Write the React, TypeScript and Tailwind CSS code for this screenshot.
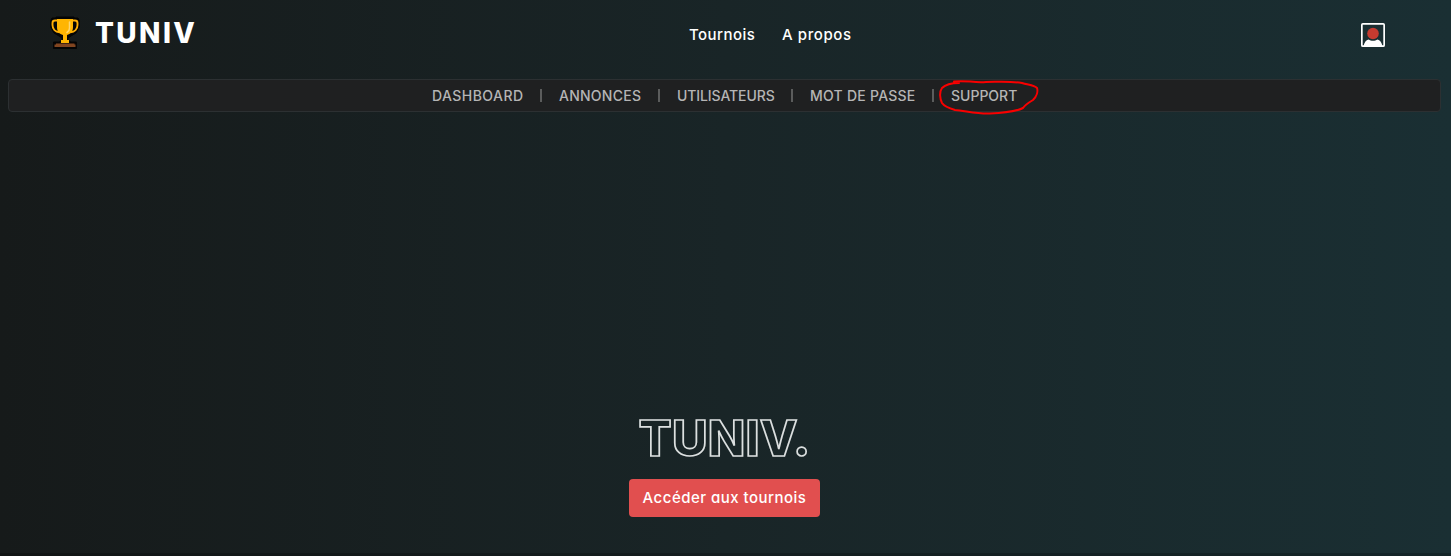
const FONT = "font-['Inter','Open_Sans',sans-serif] [font-feature-settings:'cv11']";

function Trophy() {
  return (
    <svg className="mt-[16px] h-[34px] w-[30px] shrink-0" viewBox="0 0 30 34">
      <path d="M6 1H24V2H28L29.500 5V11L26 17L21 20L18 22V25H20V26H26.500V32.500H3.500V26H10V25H12V22L9 20L4 17L0.500 11V5L2 2H6Z" fill="#050505" stroke="#050505" strokeWidth="1" strokeLinejoin="round" />
      <path d="M8 4.500H5Q2.500 4.500 2.500 7V9C2.500 13 5.500 15.800 9.500 16.300M22 4.500H25Q27.500 4.500 27.500 7V9C27.500 13 24.500 15.800 20.500 16.300" fill="none" stroke="#ffad05" strokeWidth="1.900" />
      <path d="M7 3H23V11C23 16 20.500 18 17 19V24H19V27H11V24H13V19C9.500 18 7 16 7 11Z" fill="#ffb502" />
      <path d="M19.500 6V12Q19.500 15 17 16.500" fill="none" stroke="#ffd56c" strokeWidth="1.500" strokeLinecap="round" />
      <path d="M6 27.500H24.500V28.500H25.500V31H4.500V28.500H6Z" fill="#814520" />
    </svg>
  );
}

function Avatar() {
  return (
    <svg className="mt-[23px] h-[24px] w-[24px]" viewBox="0 0 24 24">
      <rect x="0.850" y="0.850" width="22.300" height="22.300" rx="1" fill="none" stroke="#fff" strokeWidth="1.700" />
      <path d="M2.500 23C3.500 19 5 17.200 7.500 16.400C10 18.300 14 18.300 16.500 16.400C19 17.200 20.500 19 21.500 23Z" fill="#fff" />
      <circle cx="12" cy="10.500" r="5.800" fill="#c53b30" />
    </svg>
  );
}

const links = [
  { label: "DASHBOARD", box: "w-[92px] tracking-[0.450px]" },
  { label: "ANNONCES", box: "w-[83px] tracking-[0.250px]" },
  { label: "UTILISATEURS", box: "w-[98px] tracking-[-0.100px]" },
  { label: "MOT DE PASSE", box: "w-[106px] tracking-[0.250px]" },
  { label: "SUPPORT", box: "w-[66px]" },
];

export default function App() {
  return (
    <div className={`flex h-[556px] w-full flex-col overflow-hidden bg-[linear-gradient(to_right,#161a1a,#192527_50%,#1a2f33)] ${FONT}`}>
      <header className="flex h-[79px] shrink-0 items-start pr-[66px] pl-[50px]">
        <a className="flex w-[639px] items-start">
          <Trophy />
          <span className="ml-[15px] pt-[13px] text-[28px] leading-[40px] font-extrabold tracking-[2.400px] text-white">TUNIV</span>
        </a>
        <nav className="flex grow gap-[27px] pt-[23px] text-[15px] leading-[24px] font-medium text-white">
          <a className="w-[66px] tracking-[0.450px] whitespace-nowrap">Tournois</a>
          <a className="tracking-[0.600px] whitespace-nowrap">A propos</a>
        </nav>
        <Avatar />
      </header>

      <nav className="relative mr-[10px] ml-[8px] flex h-[33px] shrink-0 items-center rounded-[4px] border border-[#2c3032] bg-[#1f2021] pb-[1px] pl-[423px] text-[14px] font-medium text-[#b5b5b5]">
        {links.map(({ label, box }, i) => (
          <div key={label} className="flex items-center">
            {i > 0 && <span className="mr-[17px] ml-[16px] h-[13px] w-[2px] bg-[#5b5c5c]" />}
            <a className={`${box} whitespace-nowrap`}>{label}</a>
          </div>
        ))}
        <svg className="absolute top-[-2px] left-[928px] h-[38px] w-[104px]" viewBox="0 0 104 38" fill="none">
          <path d="M22 5C15 5 9 6 5 10C2 14 3 21 5 25C7 28 11 30 18 32C29 33 40 36 53 35.500C66 35 78 34 86 30C88 27 91 25 96 22C100 18 101 13 100 10C97 7 91 7 85 5C72 3 61 4 49 4C36 5 29 2 17 3.500" stroke="#f90000" strokeWidth="2" strokeLinecap="round" strokeLinejoin="round" />
        </svg>
      </nav>

      <main className="flex grow flex-col items-center pt-[297px] pr-[2px]">
        <h1 className="h-[70px] text-[49px] leading-[60px] font-extrabold tracking-[0.200px] text-transparent [-webkit-text-stroke:1.700px_#dce0e0]">TUNIV.</h1>
        <button className="h-[38px] w-[191px] shrink-0 rounded-[4px] bg-[#e14f4f] text-[15px] font-medium tracking-[0.480px] whitespace-nowrap text-white">
          Accéder aux tournois
        </button>
      </main>
      <div className="h-[3px] shrink-0 bg-black/20" />
    </div>
  );
}
